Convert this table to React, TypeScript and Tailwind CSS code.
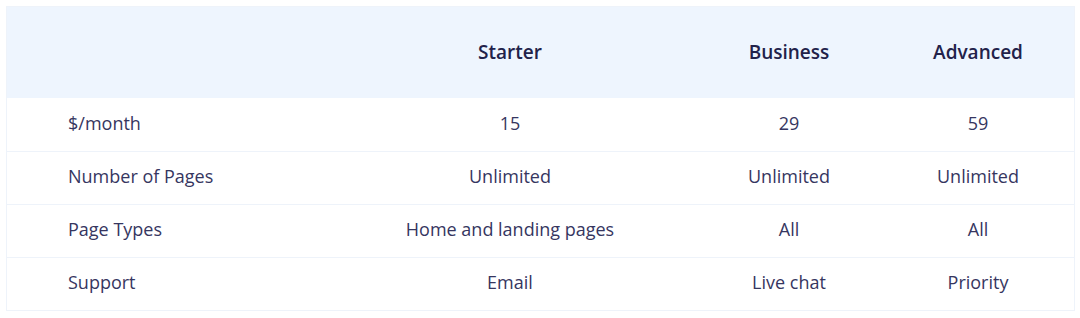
import React from "react";

const rows: [string, string, string, string][] = [
  ["$/month", "15", "29", "59"],
  ["Number of Pages", "Unlimited", "Unlimited", "Unlimited"],
  ["Page Types", "Home and landing pages", "All", "All"],
  ["Support", "Email", "Live chat", "Priority"],
];

export default function App() {
  return (
    <div className="w-[1080px] h-[318px] bg-white pt-[6px] pl-[6px]" style={{ fontFamily: "'Open Sans', Lato, sans-serif" }}>
      <div className="w-[1069px] border border-[#eef3fa]">
        <div className="grid grid-cols-[317px_372px_186px_192px] h-[91px] bg-[#eef5fe] items-center text-[19px] font-semibold text-[#22224a] pb-[1px]">
          <div />
          <div className="text-center">Starter</div>
          <div className="text-center">Business</div>
          <div className="text-center">Advanced</div>
        </div>
        {rows.map((r, i) => (
          <div
            key={i}
            className={`grid grid-cols-[317px_372px_186px_192px] h-[53px] items-center text-[18px] text-[#36365f] pb-[3px] ${i > 0 ? "border-t border-[#eef3fa]" : ""}`}
          >
            <div className="pl-[61px]">{r[0]}</div>
            <div className="text-center">{r[1]}</div>
            <div className="text-center">{r[2]}</div>
            <div className="text-center">{r[3]}</div>
          </div>
        ))}
      </div>
    </div>
  );
}
